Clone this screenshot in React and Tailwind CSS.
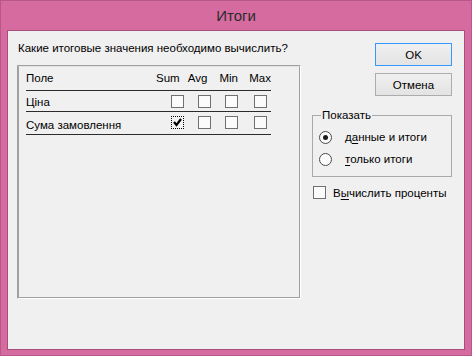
import React from 'react';

const font = { fontFamily: '"Liberation Sans", Arial, sans-serif' };

const Box = ({ checked }) => (
  <div
    className={`w-[13px] h-[13px] shrink-0 flex items-center justify-center ${
      checked ? 'border border-dotted border-black bg-[#f4f4f4]' : 'border border-[#707070] bg-[#fbfbfb]'
    }`}
  >
    {checked && (
      <svg width="11" height="11" viewBox="0 0 11 11">
        <path d="M2 5 L4.5 8 L9 2" fill="none" stroke="#000" strokeWidth="2.2" />
      </svg>
    )}
  </div>
);

const Radio = ({ on }) => (
  <div className="w-[13px] h-[13px] rounded-full border border-[#4a4a4a] bg-[#fbfbfb] flex items-center justify-center shrink-0">
    {on && <div className="w-[5px] h-[5px] rounded-full bg-[#1a1a1a]" />}
  </div>
);

const CheckRow = ({ name, sum, h, pt }) => (
  <div className={`flex border-b border-[#2b2b2b] ${h}`}>
    <div className={`w-[145px] ${pt} leading-4`}>{name}</div>
    <div className="flex pt-[4px]">
      <Box checked={sum} />
      <div className="ml-[14px]"><Box /></div>
      <div className="ml-[14px]"><Box /></div>
      <div className="ml-[16px]"><Box /></div>
    </div>
  </div>
);

export default function App() {
  return (
    <div
      className="w-[472px] h-[356px] bg-[#d66ba0] border border-[#b9578b] flex flex-col text-[11.5px] text-black whitespace-nowrap"
      style={font}
    >
      <div className="h-[29px] flex items-center justify-center text-[15px] text-[#2b2b2b] pt-[1px]">Итоги</div>
      <div className="mx-[6px] h-[320px] border border-[#a94c7e] bg-[#f0f0f0] flex">
        <div className="ml-[9px] w-[284px] pt-[9px] flex flex-col">
          <div className="ml-[1px] leading-4 h-[16px]">Какие итоговые значения необходимо вычислить?</div>
          <div className="mt-[9px] h-[234px] border border-t-[#a0a0a0] border-l-[#a0a0a0] border-r-white border-b-white">
            <div className="h-full border border-t-[#e3e3e3] border-l-[#a0a0a0] border-r-[#a0a0a0] border-b-[#a0a0a0] pl-[7px]">
              <div className="w-[245px]">
                <div className="flex h-[24px] border-b border-[#2b2b2b] pt-[3px] leading-4">
                  <div className="w-[131px]">Поле</div>
                  <div className="w-[32px]">Sum</div>
                  <div className="w-[32px]">Avg</div>
                  <div className="w-[30px]">Min</div>
                  <div>Max</div>
                </div>
                <CheckRow name="Ціна" h="h-[21px]" pt="pt-[3px]" />
                <CheckRow name="Сума замовлення" sum h="h-[23px]" pt="pt-[5px]" />
              </div>
            </div>
          </div>
        </div>
        <div className="ml-[11px] w-[140px] pt-[12px] flex flex-col">
          <button className="self-end w-[77px] h-[23px] border border-[#3399ff] bg-gradient-to-b from-[#f0f0f0] to-[#e3e3e3] leading-4">
            OK
          </button>
          <button className="self-end mt-[7px] w-[77px] h-[23px] border border-[#acacac] bg-gradient-to-b from-[#f0f0f0] to-[#e3e3e3] leading-4">
            Отмена
          </button>
          <fieldset className="mt-[11px] h-[70px] border border-[#a9a9a9] px-[6px]">
            <legend className="ml-[2px] px-[1px] leading-4">Показать</legend>
            <div className="flex items-center h-[16px] mt-[6px]">
              <Radio on />
              <span className="ml-[13px] leading-4">
                д<u className="underline-offset-2">а</u>нные и итоги
              </span>
            </div>
            <div className="flex items-center h-[16px] mt-[6px]">
              <Radio />
              <span className="ml-[13px] leading-4">
                <u className="underline-offset-2">т</u>олько итоги
              </span>
            </div>
          </fieldset>
          <div className="mt-[9px] ml-[1px] flex items-center h-[13px]">
            <Box />
            <span className="ml-[7px] leading-4">
              В<u className="underline-offset-2">ы</u>числить проценты
            </span>
          </div>
        </div>
      </div>
    </div>
  );
}
